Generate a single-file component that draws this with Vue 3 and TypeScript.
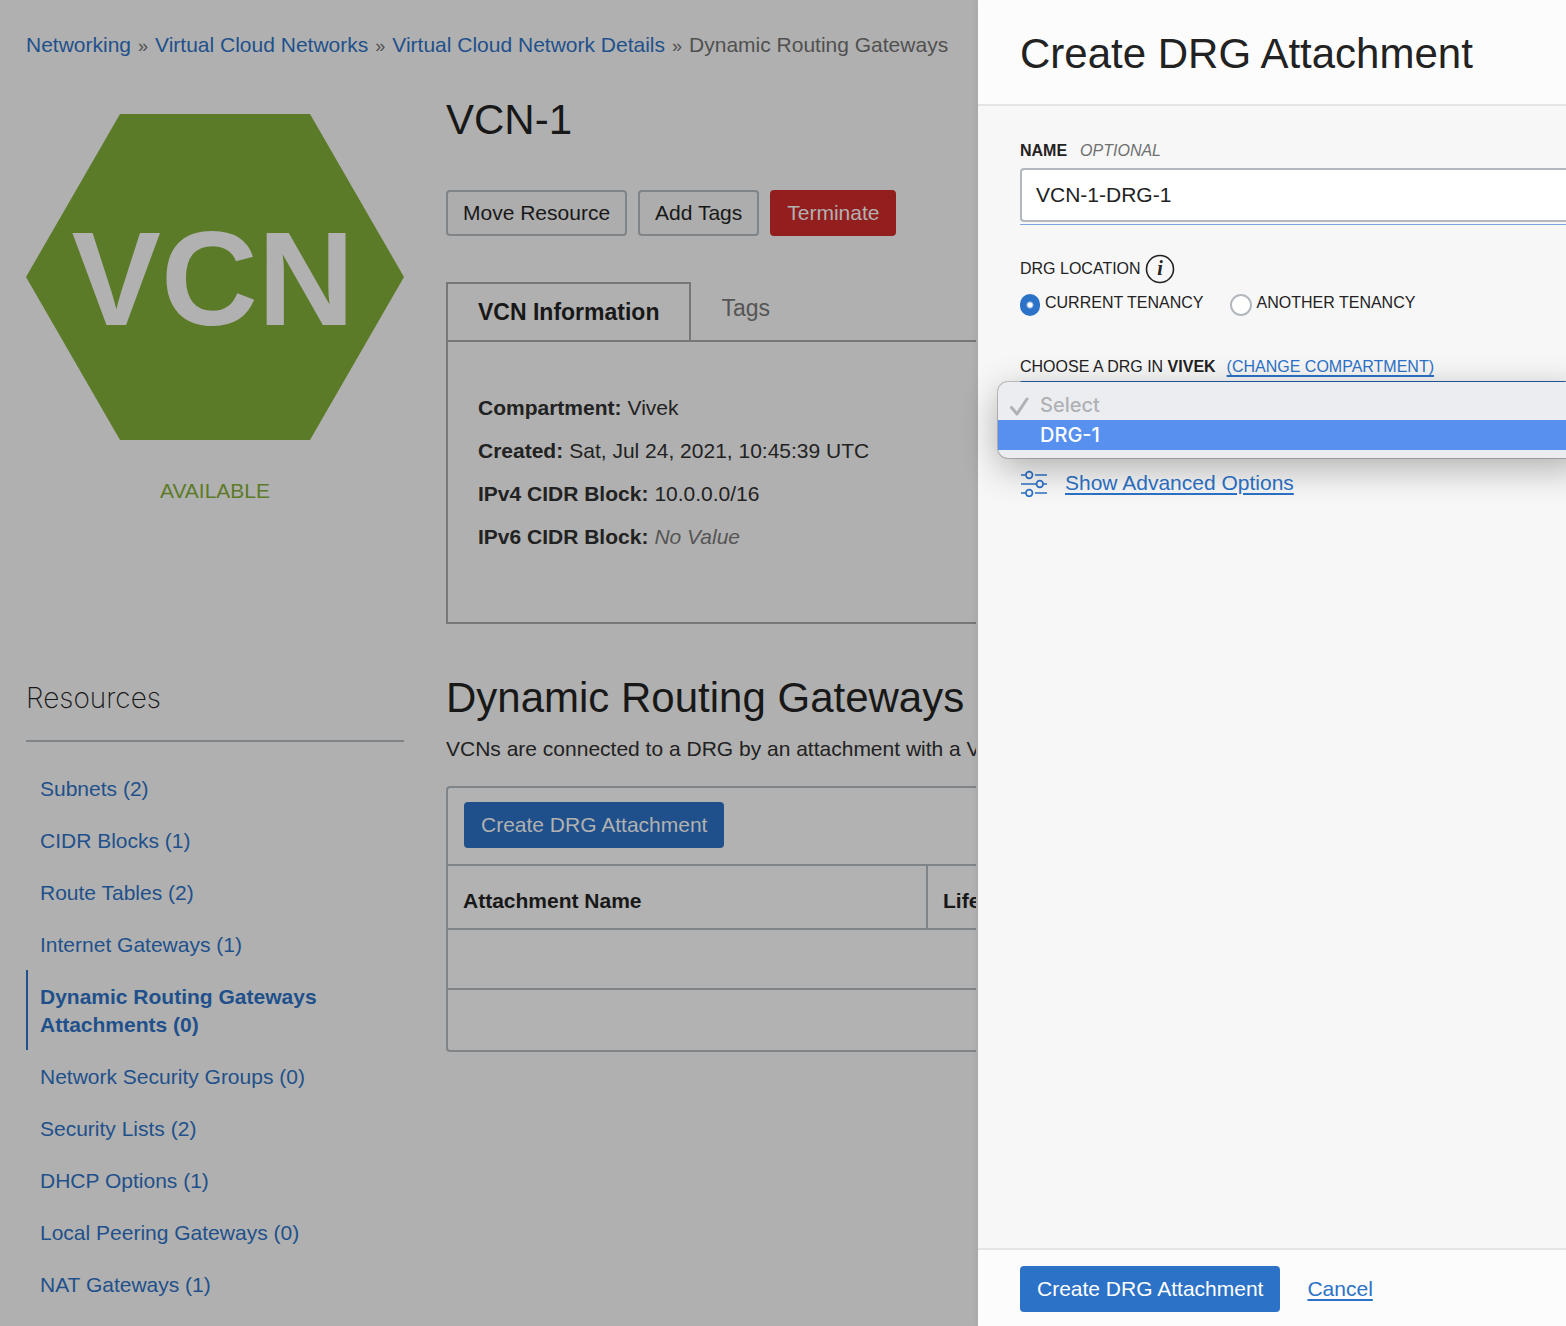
<script setup lang="ts">
import { ref } from 'vue'

interface Crumb { label: string; link: boolean }
interface Resource { label: string; count: number; active?: boolean }
interface Detail { term: string; value: string; empty?: boolean }

const crumbs: Crumb[] = [
  { label: 'Networking', link: true },
  { label: 'Virtual Cloud Networks', link: true },
  { label: 'Virtual Cloud Network Details', link: true },
  { label: 'Dynamic Routing Gateways', link: false },
]

const details: Detail[] = [
  { term: 'Compartment:', value: 'Vivek' },
  { term: 'Created:', value: 'Sat, Jul 24, 2021, 10:45:39 UTC' },
  { term: 'IPv4 CIDR Block:', value: '10.0.0.0/16' },
  { term: 'IPv6 CIDR Block:', value: 'No Value', empty: true },
]

const resources: Resource[] = [
  { label: 'Subnets', count: 2 },
  { label: 'CIDR Blocks', count: 1 },
  { label: 'Route Tables', count: 2 },
  { label: 'Internet Gateways', count: 1 },
  { label: 'Dynamic Routing Gateways Attachments', count: 0, active: true },
  { label: 'Network Security Groups', count: 0 },
  { label: 'Security Lists', count: 2 },
  { label: 'DHCP Options', count: 1 },
  { label: 'Local Peering Gateways', count: 0 },
  { label: 'NAT Gateways', count: 1 },
]

const name = ref('VCN-1-DRG-1')
const tenancy = ref<'current' | 'another'>('current')
const drg = ref('')
</script>

<template>
  <div class="page">
    <main class="main">
      <nav class="crumbs" aria-label="Breadcrumb">
        <template v-for="(c, i) in crumbs" :key="c.label">
          <span v-if="i > 0" class="sep"> » </span>
          <a v-if="c.link" href="#">{{ c.label }}</a>
          <span v-else>{{ c.label }}</span>
        </template>
      </nav>

      <div class="layout">
        <div class="status">
          <svg class="hexagon" viewBox="0 0 378 326" role="img" aria-label="VCN">
            <polygon points="94,0 284,0 378,163 284,326 94,326 0,163" fill="#5c7b29" />
            <text x="187" y="211" text-anchor="middle" font-size="134" font-weight="700" fill="#b1b1b1">VCN</text>
          </svg>
          <p class="state">AVAILABLE</p>
        </div>

        <section class="overview">
          <h1>VCN-1</h1>
          <div class="actions">
            <button type="button" class="btn">Move Resource</button>
            <button type="button" class="btn">Add Tags</button>
            <button type="button" class="btn danger">Terminate</button>
          </div>
          <div class="tabs" role="tablist">
            <button type="button" role="tab" aria-selected="true" class="tab active">VCN Information</button>
            <button type="button" role="tab" aria-selected="false" class="tab">Tags</button>
          </div>
          <dl class="info">
            <div v-for="d in details" :key="d.term">
              <dt>{{ d.term }}</dt>
              <dd :class="{ empty: d.empty }">{{ d.value }}</dd>
            </div>
          </dl>
        </section>

        <aside class="resources">
          <h3>Resources</h3>
          <ul>
            <li v-for="r in resources" :key="r.label" :class="{ active: r.active }">
              <a href="#">{{ r.label }} ({{ r.count }})</a>
            </li>
          </ul>
        </aside>

        <section class="gateways">
          <h2>Dynamic Routing Gateways</h2>
          <p class="intro">VCNs are connected to a DRG by an attachment with a VCN</p>
          <div class="card">
            <div class="toolbar">
              <button type="button" class="btn primary">Create DRG Attachment</button>
            </div>
            <table>
              <colgroup><col class="name-col" /><col /></colgroup>
              <thead>
                <tr><th scope="col">Attachment Name</th><th scope="col">Lifecycle State</th></tr>
              </thead>
              <tbody>
                <tr><td colspan="2"></td></tr>
              </tbody>
            </table>
            <div class="pager"></div>
          </div>
        </section>
      </div>
    </main>

    <form class="panel" @submit.prevent>
      <header><h2>Create DRG Attachment</h2></header>

      <div class="body">
        <label class="label" for="name"><b>NAME</b><i>OPTIONAL</i></label>
        <div class="field"><input id="name" v-model="name" type="text" /></div>

        <div class="label location">
          <span id="loc">DRG LOCATION</span>
          <svg width="30" height="30" viewBox="0 0 30 30" aria-hidden="true">
            <circle cx="15" cy="15" r="13.5" fill="none" stroke="#222" stroke-width="1.600" />
            <text class="info-glyph" x="15" y="21" text-anchor="middle" fill="#222">i</text>
          </svg>
        </div>
        <div class="radios" role="radiogroup" aria-labelledby="loc">
          <label><input v-model="tenancy" type="radio" name="tenancy" value="current" />CURRENT TENANCY</label>
          <label><input v-model="tenancy" type="radio" name="tenancy" value="another" />ANOTHER TENANCY</label>
        </div>

        <div class="label choose">
          <label for="drg">CHOOSE A DRG IN <b>VIVEK</b></label>
          <a href="#">(CHANGE COMPARTMENT)</a>
        </div>
        <div class="picker">
          <select id="drg" v-model="drg">
            <option value=""></option>
          </select>
          <ul class="menu" role="listbox">
            <li class="disabled" role="option" aria-disabled="true">
              <svg width="20" height="22" viewBox="0 0 20 22" fill="none" stroke="#b0b1b4" stroke-width="3" stroke-linecap="round" stroke-linejoin="round" aria-hidden="true">
                <path d="M2.500 13.500L8 20L18 5" />
              </svg>
              Select
            </li>
            <li class="highlight" role="option" aria-selected="true">DRG-1</li>
          </ul>
        </div>

        <div class="advanced">
          <svg width="28" height="28" viewBox="0 0 28 28" fill="none" stroke="#2c72c7" stroke-width="1.700" aria-hidden="true">
            <path d="M1 6H5.500M15 6H27M1 15H16.500M23 15H27M1 24H5.500M15 24H27" />
            <circle cx="9.200" cy="6" r="3.300" />
            <circle cx="19.800" cy="15" r="3.300" />
            <circle cx="9.200" cy="24" r="3.300" />
          </svg>
          <a href="#">Show Advanced Options</a>
        </div>
      </div>

      <footer>
        <button type="submit" class="btn primary">Create DRG Attachment</button>
        <a href="#">Cancel</a>
      </footer>
    </form>
  </div>
</template>

<style>
body {
  margin: 0;
}
</style>

<style scoped>
* {
  box-sizing: border-box;
}

.page {
  display: grid;
  grid-template-columns: minmax(0, 978fr) minmax(0, 588fr);
  min-height: 100vh;
  overflow: hidden;
  background: #b0b0b0;
  color: #222;
  font-family: "Liberation Sans", Arial, sans-serif;
  font-size: 21px;
  line-height: 28px;
}

h1, h2, h3, p, ul, dl, dd {
  margin: 0;
  padding: 0;
  font-weight: 400;
}

h1, h2 {
  font-size: 42px;
  line-height: 48px;
  white-space: nowrap;
}

ul {
  list-style: none;
}

button, input, select {
  font: inherit;
  color: inherit;
}

/* Dimmed page behind the panel */
.main {
  padding: 31px 2px 16px 26px;
  overflow: hidden;
}

.main h1, .main h2 {
  color: #181818;
}

.main a {
  color: #1f508b;
  text-decoration: none;
}

.crumbs {
  color: #505050;
  white-space: nowrap;
}

.sep {
  margin: 0 2px;
  font-size: 18px;
}

.layout {
  display: grid;
  grid-template-columns: 378px minmax(0, 1fr);
  column-gap: 42px;
  row-gap: 50px;
  margin-top: 36px;
}

.status {
  padding-top: 18px;
}

.hexagon {
  display: block;
  width: 100%;
}

.state {
  margin-top: 37px;
  color: #5c7b29;
  text-align: center;
}

.btn {
  height: 46px;
  padding: 0 15px;
  border: 2px solid #7f8489;
  border-radius: 4px;
  background: #adadad;
  color: #181818;
  white-space: nowrap;
}

.btn.danger {
  border-color: #921e1e;
  background: #921e1e;
  color: #b1b1b1;
}

.btn.primary {
  border-color: #1f508b;
  background: #1f508b;
  color: #b1b1b1;
}

.actions {
  display: flex;
  gap: 11px;
  margin: 46px 0;
}

.tabs {
  display: flex;
  height: 58px;
}

.tab {
  padding: 0 30px 6px;
  border: 0;
  background: none;
  color: #555;
  font-size: 23px;
}

.tab.active {
  padding: 0 30px;
  border: 2px solid #777;
  border-bottom: 0;
  color: #181818;
  font-weight: 700;
}

.info {
  display: flex;
  flex-direction: column;
  gap: 15px;
  min-height: 284px;
  padding: 52px 30px 30px;
  border: 2px solid #777;
  border-right: 0;
}

.info dt {
  display: inline;
  font-weight: 700;
}

.info dd {
  display: inline;
  margin-left: 6px;
}

.info dd.empty {
  color: #555;
  font-style: italic;
}

.resources h3 {
  padding: 6px 0 24px;
  border-bottom: 2px solid #7f8489;
  color: #181818;
  font-family: Inter, "Liberation Sans", sans-serif;
  font-size: 28px;
  font-weight: 200;
  line-height: 36px;
}

.resources ul {
  margin-top: 20px;
}

.resources li {
  padding: 13px 60px 11px 12px;
  border-left: 2px solid transparent;
}

.resources li.active {
  border-color: #1f508b;
  font-weight: 700;
}

.intro {
  margin: 13px 0 23px;
  overflow: hidden;
  white-space: nowrap;
}

.card {
  border: 2px solid #7f8489;
  border-right: 0;
  border-radius: 4px 0 0 4px;
  background: #b2b2b2;
}

.toolbar {
  height: 76px;
  padding: 14px 16px;
}

table {
  width: 100%;
  table-layout: fixed;
  border-spacing: 0;
}

.name-col {
  width: 480px;
}

th {
  height: 66px;
  padding: 8px 15px 0;
  overflow: hidden;
  border-top: 2px solid #7f8489;
  border-bottom: 2px solid #7f8489;
  color: #181818;
  text-align: left;
  white-space: nowrap;
}

th:first-child {
  border-right: 2px solid #7f8489;
}

th:last-child {
  padding-right: 0;
}

td {
  height: 60px;
  padding: 0;
  border-bottom: 2px solid #7f8489;
}

.pager {
  height: 60px;
}

/* Slide-in panel */
.panel {
  position: relative;
  display: flex;
  flex-direction: column;
  background: #f7f7f7;
  box-shadow: 0 0 8px rgba(0, 0, 0, 0.08);
}

.panel a {
  color: #2c72c7;
  text-underline-offset: 3px;
  text-decoration-thickness: 2px;
}

header {
  padding: 30px 42px 26px;
  border-bottom: 2px solid #e5e5e5;
  background: #fcfcfc;
}

.body {
  flex: 1;
  padding: 35px 0 34px 42px;
}

.label, .radios {
  display: flex;
  align-items: center;
  font-size: 16px;
  line-height: 20px;
}

.label i {
  margin-left: 13px;
  color: #707070;
}

.field {
  margin-top: 7px;
  padding-bottom: 2px;
  border-bottom: 1px solid #7fa5dc;
}

.field input {
  display: block;
  width: 100%;
  height: 54px;
  padding: 0 14px;
  border: 2px solid #b3b8be;
  border-right: 0;
  border-radius: 4px 0 0 4px;
  outline: none;
  background: #fff;
}

.location {
  gap: 4px;
  margin-top: 29px;
}

.info-glyph {
  font-family: "Liberation Serif", serif;
  font-size: 20px;
  font-style: italic;
  font-weight: 700;
}

.radios {
  gap: 26px;
  margin-top: 10px;
}

.radios label {
  display: flex;
  gap: 5px;
  line-height: 18px;
}

.radios input {
  appearance: none;
  width: 22px;
  height: 22px;
  margin: 0;
  border: 2px solid #b3b8be;
  border-radius: 11px;
  background: #fff;
}

.radios input:checked {
  width: 20px;
  border: 0;
  background: radial-gradient(circle, #fff 2px, #2c72c7 4px);
}

.choose {
  gap: 11px;
  margin-top: 41px;
}

.picker {
  position: relative;
  margin-top: 4px;
}

.picker select {
  display: block;
  width: 100%;
  height: 54px;
  border: 2px solid #b3b8be;
  border-top: 1px solid #2c72c7;
  background: #fff;
}

.menu {
  position: absolute;
  top: 1px;
  right: -20px;
  left: -22px;
  padding: 8px 0;
  border-radius: 10px;
  background: #ecedf1;
  box-shadow: 0 0 0 1px rgba(0, 0, 0, 0.2), 0 10px 36px rgba(0, 0, 0, 0.3);
  font-family: Inter, "Liberation Sans", sans-serif;
  font-size: 20px;
  font-weight: 500;
  line-height: 30px;
}

.menu li {
  display: flex;
  align-items: center;
  padding-left: 42px;
}

.menu .disabled {
  gap: 11px;
  padding-left: 11px;
  color: #b0b1b4;
}

.menu .highlight {
  background: #5790ee;
  color: #fff;
}

.advanced {
  display: flex;
  align-items: center;
  gap: 17px;
  margin-top: 34px;
}

footer {
  display: flex;
  align-items: center;
  gap: 27px;
  padding: 16px 42px 14px;
  border-top: 2px solid #e5e5e5;
  background: #fcfcfc;
}

.panel .btn.primary {
  border-color: #2c72c7;
  background: #2c72c7;
  color: #fff;
}
</style>
